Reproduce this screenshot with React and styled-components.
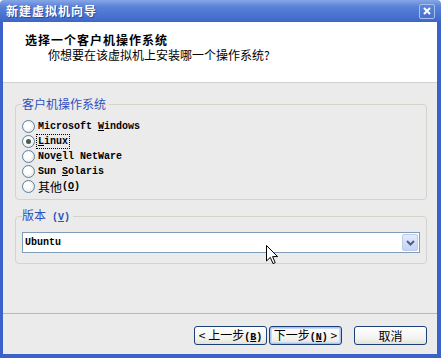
import React from "react";
import styled, { createGlobalStyle } from "styled-components";

const GlobalStyle = createGlobalStyle`
  html, body {
    margin: 0;
    padding: 0;
    background: #ffffff;
  }
  body {
    font-family: "Noto Sans CJK SC", "Liberation Sans", sans-serif;
    font-size: 12px;
    color: #000;
  }
`;

const Window = styled.div`
  position: relative;
  width: 441px;
  height: 358px;
  display: flex;
  flex-direction: column;
  overflow: hidden;
`;

const TitleBar = styled.div`
  height: 22px;
  flex: none;
  display: flex;
  align-items: center;
  justify-content: space-between;
  padding: 0 6px;
  box-sizing: border-box;
  background: linear-gradient(#86a6e6 0%, #5a82d8 30%, #4a73d0 70%, #3e66c6 100%);
  border-radius: 4px 4px 0 0;
`;

const TitleText = styled.span`
  color: #ffffff;
  font-weight: bold;
  letter-spacing: 1px;
  line-height: 14px;
  text-shadow: 1px 1px 0 #2a4a9a;
`;

const CloseButton = styled.div`
  width: 16px;
  height: 15px;
  box-sizing: border-box;
  border: 1px solid #a8bfee;
  border-radius: 2px;
  background: linear-gradient(#5e86da, #4670cc);
  display: flex;
  align-items: center;
  justify-content: center;
`;

const Frame = styled.div`
  flex: 1;
  display: flex;
  flex-direction: column;
  border-left: 3px solid #3a62c9;
  border-right: 4px solid #3a62c9;
  border-bottom: 4px solid #3a62c9;
  background: #ebebeb;
`;

const Header = styled.div`
  height: 61px;
  flex: none;
  box-sizing: border-box;
  background: #ffffff;
  border-bottom: 1px solid #d2d2cc;
  padding: 11px 0 0 22px;
`;

const Heading = styled.div`
  font-weight: bold;
  letter-spacing: 1px;
  line-height: 14px;
`;

const SubHeading = styled.div`
  margin: 1px 0 0 23px;
  line-height: 14px;
`;

const Body = styled.div`
  flex: 1;
  display: flex;
  flex-direction: column;
  gap: 8px;
  padding: 14px 10px 0 12px;
`;

const GroupBox = styled.fieldset`
  margin: 0;
  padding: ${(p) => p.$pad};
  border: 1px solid #d4d3cc;
  border-radius: 4px;
  min-width: 0;
`;

const Legend = styled.legend`
  padding: 0 3px 0 0;
  color: #2c52bf;
  line-height: 14px;
`;

const Mono = styled.span`
  font-family: "Liberation Mono", "Courier New", monospace;
  font-size: 10px;
  font-weight: bold;
`;

const U = styled.span`
  text-decoration: underline;
`;

const RadioRow = styled.div`
  height: 15px;
  display: flex;
  align-items: center;
  gap: 2px;
`;

const RadioCircle = styled.span`
  width: 13px;
  height: 13px;
  flex: none;
  box-sizing: border-box;
  border-radius: 50%;
  border: 1px solid #5e7d9e;
  background: radial-gradient(circle at 40% 40%, #ffffff 30%, #dcdcd6 100%);
  display: flex;
  align-items: center;
  justify-content: center;
  &::after {
    content: "";
    width: 5px;
    height: 5px;
    border-radius: 50%;
    background: ${(p) => (p.$checked ? "#4c5c4c" : "transparent")};
  }
`;

const RadioLabel = styled.span`
  display: inline-flex;
  align-items: center;
  height: 13px;
  line-height: 13px;
  padding: 0 1px;
  outline: ${(p) => (p.$focused ? "1px dotted #000" : "none")};
`;

const Select = styled.div`
  height: 21px;
  box-sizing: border-box;
  border: 1px solid #7f9db9;
  background: #ffffff;
  display: flex;
  align-items: center;
  justify-content: space-between;
  padding: 0 1px 0 2px;
`;

const DropButton = styled.div`
  width: 16px;
  height: 17px;
  box-sizing: border-box;
  border: 1px solid #bccbe6;
  border-radius: 2px;
  background: linear-gradient(#e4ecfc, #c3d3f4);
  display: flex;
  align-items: center;
  justify-content: center;
`;

const Footer = styled.div`
  height: 41px;
  flex: none;
  box-sizing: border-box;
  border-top: 1px solid #9fbde2;
  display: flex;
  justify-content: flex-end;
  align-items: flex-start;
  padding: 12px 10px 0 0;
`;

const Button = styled.button`
  width: 73px;
  height: 19px;
  margin-left: ${(p) => p.$gap}px;
  padding: 0;
  box-sizing: border-box;
  border: 1px solid #1c3f78;
  border-radius: 3px;
  background: linear-gradient(#ffffff, #f2f2ee 70%, #e2e1da);
  font-family: "Noto Sans CJK SC", "Liberation Sans", sans-serif;
  font-size: 12px;
  line-height: 15px;
  color: #000;
  box-shadow: ${(p) =>
    p.$focused ? "inset 0 0 0 1px #a9c4ee, inset 0 0 0 2px #cbdaf5" : "none"};
`;

const Cursor = styled.svg`
  position: absolute;
  left: 266px;
  top: 245px;
`;

const systems = [
  { pre: "Microsoft ", u: "W", post: "indows" },
  { pre: "", u: "L", post: "inux", checked: true },
  { pre: "Nov", u: "e", post: "ll NetWare" },
  { pre: "Sun ", u: "S", post: "olaris" },
];

export default function App() {
  return (
    <>
      <GlobalStyle />
      <Window>
        <TitleBar>
          <TitleText>新建虚拟机向导</TitleText>
          <CloseButton>
            <svg width="8" height="8" viewBox="0 0 8 8">
              <path d="M1 1 L7 7 M7 1 L1 7" stroke="#fff" strokeWidth="2" />
            </svg>
          </CloseButton>
        </TitleBar>
        <Frame>
          <Header>
            <Heading>选择一个客户机操作系统</Heading>
            <SubHeading>你想要在该虚拟机上安装哪一个操作系统?</SubHeading>
          </Header>
          <Body>
            <GroupBox $pad="8px 6px 5px 6px">
              <Legend>客户机操作系统</Legend>
              {systems.map((s) => (
                <RadioRow key={s.pre + s.post}>
                  <RadioCircle $checked={s.checked} />
                  <RadioLabel $focused={s.checked}>
                    <Mono>
                      {s.pre}
                      <U>{s.u}</U>
                      {s.post}
                    </Mono>
                  </RadioLabel>
                </RadioRow>
              ))}
              <RadioRow>
                <RadioCircle />
                <RadioLabel>
                  其他<Mono>(<U>O</U>)</Mono>
                </RadioLabel>
              </RadioRow>
            </GroupBox>
            <GroupBox $pad="7px 6px 10px 6px">
              <Legend>
                版本<Mono> (<U>V</U>)</Mono>
              </Legend>
              <Select>
                <Mono>Ubuntu</Mono>
                <DropButton>
                  <svg width="9" height="6" viewBox="0 0 9 6">
                    <path d="M1 1 L4.5 4.5 L8 1" stroke="#4d6185" strokeWidth="2" fill="none" />
                  </svg>
                </DropButton>
              </Select>
            </GroupBox>
          </Body>
          <Footer>
            <Button $gap={0}>
              &lt; 上一步<Mono>(<U>B</U>)</Mono>
            </Button>
            <Button $gap={2} $focused>
              下一步<Mono>(<U>N</U>)</Mono> &gt;
            </Button>
            <Button $gap={12}>取消</Button>
          </Footer>
        </Frame>
        <Cursor width="13" height="20" viewBox="0 0 13 20">
          <path
            d="M0.5 0.5 L0.5 16 L4.3 12.4 L7 18.6 L9.2 17.6 L6.6 11.6 L11.6 11.6 Z"
            fill="#fff"
            stroke="#000"
            strokeWidth="1"
          />
        </Cursor>
      </Window>
    </>
  );
}
